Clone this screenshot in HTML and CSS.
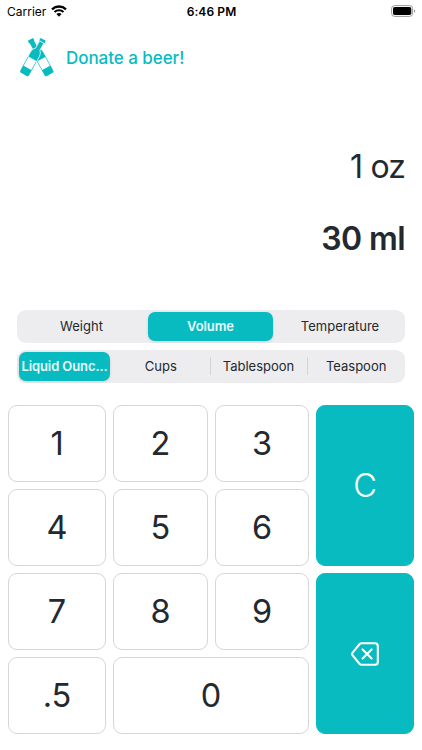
FILE: index.html
```html
<!DOCTYPE html>
<html lang="en">
<head>
    <meta charset="UTF-8">
    <meta name="viewport" content="width=device-width, initial-scale=1.0">
    <title>Kitchen Converter</title>
    <link rel="stylesheet" href="styles.css">
</head>
<body>

    <div class="status-bar">
        <div class="carrier">
            <span>Carrier</span>
            <svg class="wifi" width="16" height="12" viewBox="0 0 16 12">
                <path d="M1 4.3a10.2 10.2 0 0 1 14 0" fill="none" stroke="#000" stroke-width="2.3"/>
                <path d="M3.5 7a6.6 6.6 0 0 1 9 0" fill="none" stroke="#000" stroke-width="2.1"/>
                <path d="M8 11.7 5.4 9.1a3.8 3.8 0 0 1 5.2 0z"/>
            </svg>
        </div>
        <div class="time">6:46 PM</div>
        <div class="battery">
            <svg width="25" height="12" viewBox="0 0 25 12">
                <rect x=".6" y=".6" width="21" height="10.8" rx="3" fill="none" stroke="#999" stroke-width="1"/>
                <rect x="2" y="2" width="18.3" height="8" rx="1.8"/>
                <path d="M23 4.2c1.6.6 1.6 3 0 3.6z" fill="#999"/>
            </svg>
        </div>
    </div>

    <header class="donate">
        <svg class="bottles" width="36" height="40" viewBox="0 0 36 40">
            <g transform="translate(24.2 1.4) rotate(29)">
                <path d="M-3 0h6v3h-.6v8q2.6 2.5 2.6 6v21.2q0 1.8-1.8 1.8h-6.4q-1.8 0-1.8-1.8v-21.2q0-3.5 2.6-6v-8h-.6z" fill="#08bbc1"/>
                <path d="M-4.4 22.5h8.8v10h-8.8z" fill="#fff"/>
            </g>
            <g transform="translate(11.4 1.4) rotate(-29)">
                <path d="M-3 0h6v3h-.6v8q2.6 2.5 2.6 6v21.2q0 1.8-1.8 1.8h-6.4q-1.8 0-1.8-1.8v-21.2q0-3.5 2.6-6v-8h-.6z" fill="#08bbc1"/>
                <path d="M-4.4 22.5h8.8v10h-8.8z" fill="#fff"/>
            </g>
            <!-- front bottle neck and body, thin outline over the one behind -->
            <g transform="translate(24.2 1.4) rotate(29)">
                <path d="M-2.4 3v8q-2.6 2.5-2.6 6v5.5h10v-5.5q0-3.5-2.6-6v-8z" fill="#08bbc1" stroke="#fff" stroke-width=".7"/>
            </g>
        </svg>
        <span>Donate a beer!</span>
    </header>

    <main>
        <div class="results">
            <div class="from">1 oz</div>
            <div class="to">30 ml</div>
        </div>

        <div class="segments types">
            <button class="segment">Weight</button>
            <button class="segment active">Volume</button>
            <button class="segment">Temperature</button>
        </div>

        <div class="segments units">
            <button class="segment active">Liquid Ounc...</button>
            <button class="segment">Cups</button>
            <button class="segment divided">Tablespoon</button>
            <button class="segment divided">Teaspoon</button>
        </div>

        <div class="keypad">
            <button class="key">1</button>
            <button class="key">2</button>
            <button class="key">3</button>
            <button class="key action">C</button>
            <button class="key">4</button>
            <button class="key">5</button>
            <button class="key">6</button>
            <button class="key">7</button>
            <button class="key">8</button>
            <button class="key">9</button>
            <button class="key action" aria-label="Delete">
                <svg width="28" height="24" viewBox="0 0 28 24" fill="none" stroke="#fff" stroke-width="2.1" stroke-linecap="round" stroke-linejoin="round">
                    <path d="M10.5 1.2H24q2.8 0 2.8 2.8v16q0 2.8-2.8 2.8H10.5q-1 0-1.8-.8L1.8 13.6q-1.4-1.6 0-3.2L8.7 2q.8-.8 1.8-.8z"/>
                    <path d="m11.6 7.4 9 9m0-9-9 9"/>
                </svg>
            </button>
            <button class="key">.5</button>
            <button class="key zero">0</button>
        </div>
    </main>

</body>
</html>
```
FILE: styles.css
```css
* {
    box-sizing: border-box;
}

body {
    margin: 0;
    height: 750px;
    overflow: hidden;
    background: #fff;
    color: #23292e;
    font-family: Inter, "Liberation Sans", sans-serif;
}

button {
    margin: 0;
    padding: 0;
    border: none;
    background: none;
    color: inherit;
    font-family: inherit;
    cursor: pointer;
}

.status-bar {
    display: grid;
    grid-template-columns: 1fr auto 1fr;
    align-items: center;
    height: 22px;
    padding: 0 6px 0 7px;
    color: #000;
    font-size: 12px;
}

.carrier {
    display: flex;
    align-items: center;
    gap: 5px;
}

.wifi {
    display: block;
}

.time {
    font-weight: 600;
    letter-spacing: 0.1px;
}

.battery {
    display: flex;
    justify-content: flex-end;
}

.donate {
    display: flex;
    align-items: center;
    gap: 11px;
    height: 72px;
    padding-left: 19px;
    color: #08bbc1;
    font-size: 17px;
    font-weight: 500;
    letter-spacing: -0.05px;
}

.bottles {
    overflow: visible;
}

.results {
    height: 216px;
    padding: 53px 17px 0;
    text-align: right;
    font-size: 32px;
    line-height: 40px;
}

.from {
    letter-spacing: -1px;
    word-spacing: 0.5px;
}

.to {
    margin-top: 32px;
    font-weight: 600;
    letter-spacing: -0.6px;
    word-spacing: 0;
}

.segments {
    display: grid;
    height: 33px;
    margin: 0 17px;
    padding: 2px;
    border-radius: 9px;
    background: #ededef;
}

.types {
    grid-template-columns: 125px 125px 1fr;
    column-gap: 4px;
}

.units {
    grid-template-columns: 91px 1fr 1fr 1fr;
    column-gap: 4px;
    margin-top: 7px;
}

.segment {
    position: relative;
    padding-bottom: 1px;
    border-radius: 7px;
    font-size: 13px;
    white-space: nowrap;
}

.segment.active {
    background: #08bbc1;
    color: #e9fcfc;
    font-weight: 600;
    letter-spacing: -0.1px;
    box-shadow: 0 1px 3px rgba(0, 0, 0, 0.12);
}

.units .segment {
    padding-bottom: 2px;
}

.divided::before {
    content: "";
    position: absolute;
    left: -2px;
    top: 5px;
    width: 1px;
    height: 18px;
    background: #d3d3d6;
}

.keypad {
    display: grid;
    grid-template-columns: 98px 95px 94px 98px;
    grid-template-rows: repeat(4, 77px);
    gap: 7px;
    margin: 22px 8px 0;
}

.key {
    display: flex;
    align-items: center;
    justify-content: center;
    border: 1px solid #d6d6d8;
    border-radius: 9px;
    font-size: 32.5px;
}

.action {
    grid-column: 4;
    grid-row: span 2;
    border-color: #08bbc1;
    background: #08bbc1;
    color: #fff;
    font-weight: 300;
}

.zero {
    grid-column: span 2;
}
```
